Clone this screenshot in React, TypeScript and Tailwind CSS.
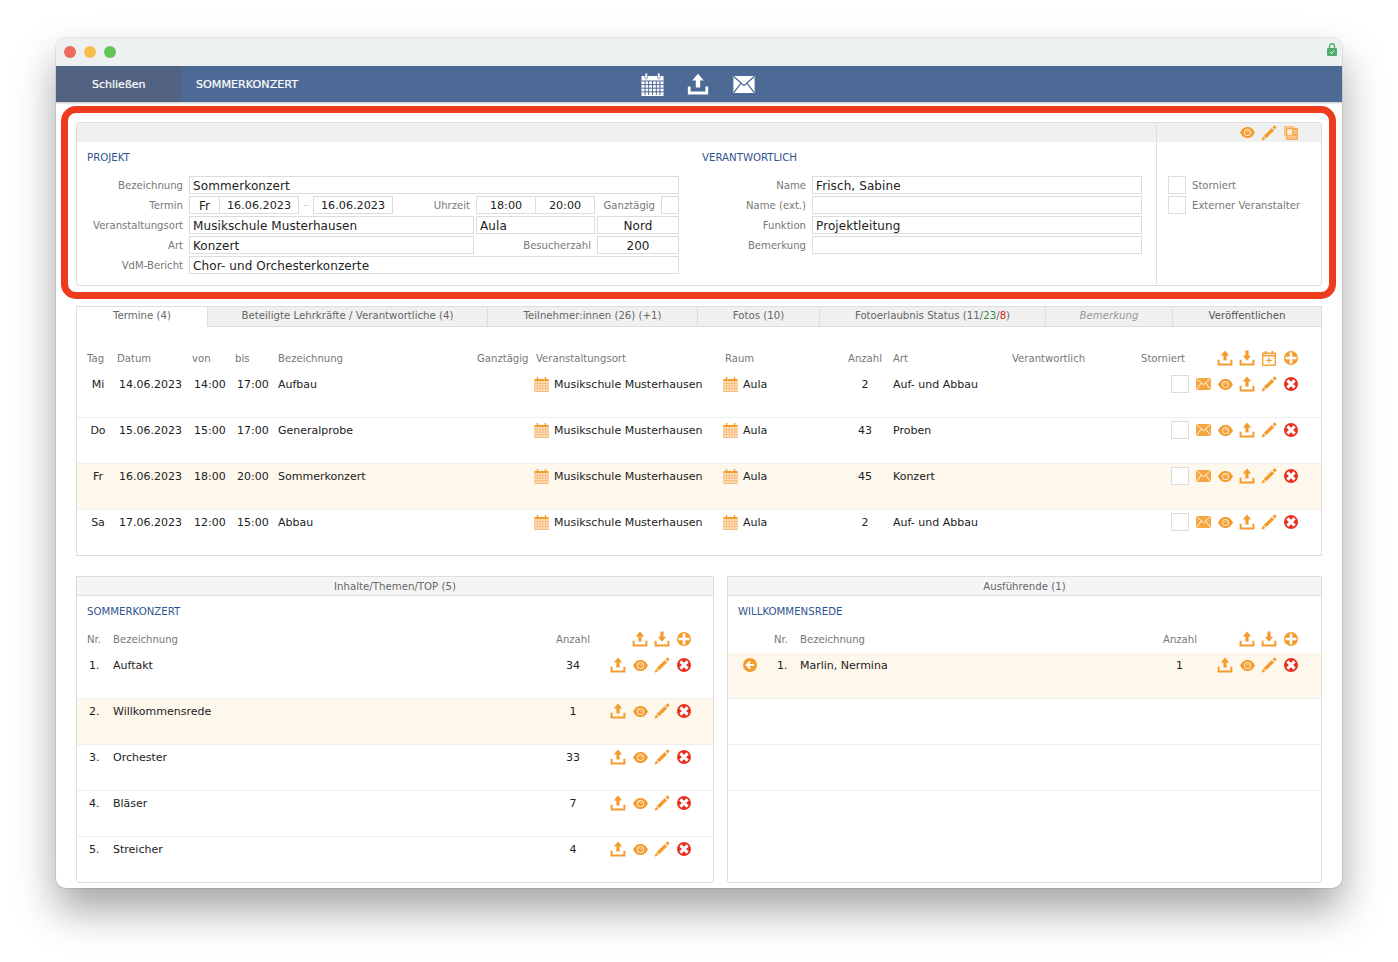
import React from "react";

const O = "#f39c2d";
const R = "#e8301e";

function UploadIcon({ c = O, w = 16 }: { c?: string; w?: number }) {
  return (
    <svg width={w} height={w} viewBox="0 0 16 16" fill={c}>
      <path d="M8 .5 12.2 5.4H9.6V10.6H6.4V5.4H3.8Z" />
      <path d="M.6 9.8H2.6V13.4H13.4V9.8H15.4V15.6H.6Z" />
    </svg>
  );
}
function DownloadIcon() {
  return (
    <svg width={16} height={16} viewBox="0 0 16 16" fill={O}>
      <path d="M6.4 .5H9.6V5.8H12.2L8 10.7 3.8 5.8H6.4Z" />
      <path d="M.6 9.8H2.6V13.4H13.4V9.8H15.4V15.6H.6Z" />
    </svg>
  );
}
function EyeIcon() {
  return (
    <svg width={15} height={11} viewBox="0 0 15 11">
      <path d="M0 5.5C2.5 1 5 0 7.5 0S12.5 1 15 5.5C12.5 10 10 11 7.5 11S2.5 10 0 5.5Z" fill={O} />
      <circle cx="7.5" cy="5.5" r="3.6" fill="#fde6c8" />
      <circle cx="7.5" cy="5.5" r="2.5" fill={O} />
      <path d="M6.4 3.6 7.6 5.4 9.3 4.6" stroke="#fde6c8" strokeWidth=".7" fill="none" />
    </svg>
  );
}
function PencilIcon() {
  return (
    <svg width={16} height={16} viewBox="0 0 16 16" fill={O}>
      <path d="M10.8 3 13.2 5.4 5.2 13.3 2.7 10.9Z" />
      <path d="M11.6 2.2 13 .8C13.4.5 13.8.5 14.2.8L15.2 1.8C15.5 2.2 15.5 2.6 15.2 3L13.9 4.5Z" />
      <path d="M2.2 11.6 4.5 13.9 1.4 15.4C.8 15.6.5 15.2.7 14.7Z" />
    </svg>
  );
}
function XIcon() {
  return (
    <svg width={14} height={14} viewBox="0 0 14 14">
      <circle cx="7" cy="7" r="7" fill={R} />
      <path d="M3.4 3.4 10.6 10.6M10.6 3.4 3.4 10.6" stroke="#fff" strokeWidth="3" />
    </svg>
  );
}
function PlusIcon() {
  return (
    <svg width={14} height={14} viewBox="0 0 14 14">
      <circle cx="7" cy="7" r="7" fill={O} />
      <path d="M7 1.5V12.5M1.5 7H12.5" stroke="#fff" strokeWidth="2.6" />
    </svg>
  );
}
function BackIcon() {
  return (
    <svg width={14} height={14} viewBox="0 0 14 14">
      <circle cx="7" cy="7" r="7" fill={O} />
      <path d="M7.2 3.4 3.6 7 7.2 10.6M3.8 7H11" stroke="#fff" strokeWidth="2" fill="none" />
    </svg>
  );
}
function MailIcon({ c = "#f4a640", line = "#fff", w = 15, h = 12 }: { c?: string; line?: string; w?: number; h?: number }) {
  return (
    <svg width={w} height={h} viewBox="0 0 15 12">
      <rect width="15" height="12" fill={c} />
      <path d="M.3.3 7.5 6.8 14.7.3M.3 11.7 5.4 5M14.7 11.7 9.6 5" stroke={line} strokeWidth=".9" fill="none" />
    </svg>
  );
}
function CalPlusIcon() {
  return (
    <svg width={14} height={15} viewBox="0 0 14 15" fill="none" stroke={O}>
      <rect x=".7" y="2.2" width="12.6" height="12" strokeWidth="1.3" />
      <path d="M.7 4.6H13.3" strokeWidth="1.6" />
      <path d="M3.6 0V3M10.4 0V3" strokeWidth="1.6" />
      <path d="M7 6.6V12.2M4.2 9.4H9.8" strokeWidth="1.2" />
    </svg>
  );
}
function CalIcon() {
  return (
    <svg width={15} height={15} viewBox="0 0 15 15">
      <rect x=".5" y="2" width="14" height="13" fill="#fde3c2" />
      <rect x=".5" y="2" width="14" height="2" fill={O} />
      <path d="M3.5 0V3M11.5 0V3" stroke={O} strokeWidth="1.4" />
      <path d="M.5 6.5H14.5M.5 9H14.5M.5 11.5H14.5M.5 14.5H14.5M3.3 4V15M6.1 4V15M8.9 4V15M11.7 4V15M.8 4V15M14.2 4V15" stroke="#f6b36a" strokeWidth=".7" />
    </svg>
  );
}
function CopyIcon() {
  return (
    <svg width={14} height={14} viewBox="0 0 15 15">
      <rect x="0" y="0" width="11" height="11" fill="#f8c58a" />
      <rect x="2" y="2" width="13" height="13" fill="#f5a94f" />
      <rect x="3.5" y="3.5" width="5" height="6" fill="#fdeedb" />
      <path d="M9.5 5H14M9.5 7.5H14M3.5 11H14M3.5 13H14" stroke="#fde3c2" strokeWidth=".9" />
    </svg>
  );
}
function WhiteCal() {
  return (
    <svg width={23} height={23} viewBox="0 0 23 23">
      <rect x=".5" y="3" width="22" height="20" fill="#fff" />
      <rect x="4" y="0" width="2.4" height="6" rx="1.2" fill="#fff" stroke="#4d6995" strokeWidth=".6" />
      <rect x="16.6" y="0" width="2.4" height="6" rx="1.2" fill="#fff" stroke="#4d6995" strokeWidth=".6" />
      <path d="M.5 8H22.5M.5 11.6H22.5M.5 15.2H22.5M.5 18.8H22.5M4.1 8V22M7.7 8V22M11.5 8V22M15.3 8V22M18.9 8V22" stroke="#4d6995" strokeWidth="1" />
    </svg>
  );
}
function LockIcon() {
  return (
    <svg width={10} height={13} viewBox="0 0 10 13">
      <path d="M2.5 5V3.2a2.5 2.5 0 0 1 5 0V5" fill="none" stroke="#4fae6e" strokeWidth="1.4" />
      <rect y="5" width="10" height="8" rx="1" fill="#4fae6e" />
      <path d="M3 9.2 4.4 10.6 7.2 7.6" fill="none" stroke="#fff" strokeWidth="1" />
    </svg>
  );
}

function Slot({ children }: { children?: React.ReactNode }) {
  return <div className="w-[22px] h-[24px] flex items-center justify-center shrink-0">{children}</div>;
}

function Box({ w, children, center, ml, num }: { w: string; children?: React.ReactNode; center?: boolean; ml?: boolean; num?: boolean }) {
  return (
    <div
      className={`${w} ${ml ? "-ml-px" : ""} ${num ? "text-[11.2px]" : "text-[12px] tracking-[0.1px]"} h-[18px] shrink-0 border border-[#dcdcdc] bg-white px-[3px] pt-[2px] flex items-center text-[#222] whitespace-nowrap ${center ? "justify-center" : ""}`}
    >
      {children}
    </div>
  );
}

function Label({ w, children }: { w: string; children: React.ReactNode }) {
  return <div className={`${w} shrink-0 h-[18px] pr-[6px] text-right text-[#777] text-[10.1px] leading-[20px] whitespace-nowrap`}>{children}</div>;
}

function Title({ children, className = "" }: { children: React.ReactNode; className?: string }) {
  return <div className={`h-[16px] leading-[18px] text-[10.2px] text-[#2f5590] ${className}`}>{children}</div>;
}

const termine = [
  ["Mi", "14.06.2023", "14:00", "17:00", "Aufbau", "2", "Auf- und Abbau"],
  ["Do", "15.06.2023", "15:00", "17:00", "Generalprobe", "43", "Proben"],
  ["Fr", "16.06.2023", "18:00", "20:00", "Sommerkonzert", "45", "Konzert"],
  ["Sa", "17.06.2023", "12:00", "15:00", "Abbau", "2", "Auf- und Abbau"],
];
const inhalte = [
  ["1.", "Auftakt", "34"],
  ["2.", "Willkommensrede", "1"],
  ["3.", "Orchester", "33"],
  ["4.", "Bläser", "7"],
  ["5.", "Streicher", "4"],
];
const tabGrid = "grid grid-cols-[40px_75px_43px_43px_199px_59px_189px_123px_45px_119px_129px_51px_110px]";
const leftGrid = "grid grid-cols-[36px_443px_51px_88px]";
const rightGrid = "grid grid-cols-[46px_26px_363px_51px_88px]";
const cell = "h-[24px] flex items-center whitespace-nowrap";
const txt = "h-[24px] pt-[2px] flex items-center whitespace-nowrap";

function RowIcons() {
  return (
    <div className="flex">
      <Slot><UploadIcon /></Slot>
      <Slot><EyeIcon /></Slot>
      <Slot><PencilIcon /></Slot>
      <Slot><XIcon /></Slot>
    </div>
  );
}
function HeadIcons() {
  return (
    <div className="flex pl-[22px] -mt-[2px]">
      <Slot><UploadIcon /></Slot>
      <Slot><DownloadIcon /></Slot>
      <Slot><PlusIcon /></Slot>
    </div>
  );
}

export default function App() {
  return (
    <div className="w-[1398px] h-[962px] bg-white pt-[38px] pl-[56px] overflow-hidden [font-family:'DejaVu_Sans',sans-serif]">
      <div className="relative w-[1286px] h-[850px] rounded-[10px] bg-white overflow-hidden shadow-[0_0_0_1px_rgba(0,0,0,0.07),0_22px_42px_rgba(0,0,0,0.36)]">
        {/* title bar */}
        <div className="h-[28px] bg-[#eef1f1] flex items-center pl-[8px] gap-[8px]">
          <span className="w-[12px] h-[12px] rounded-full bg-[#ed6a5e]" />
          <span className="w-[12px] h-[12px] rounded-full bg-[#f5bf4f]" />
          <span className="w-[12px] h-[12px] rounded-full bg-[#61c554]" />
          <span className="ml-auto mr-[5px] -mt-[5px] flex"><LockIcon /></span>
        </div>
        {/* toolbar */}
        <div className="h-[36px] bg-[#4d6995] flex items-center shadow-[0_1px_2px_rgba(0,0,0,0.25)] relative">
          <div className="w-[125px] h-full bg-[#526382] pt-[2px] flex items-center pl-[36px] text-[11px] text-white [-webkit-text-stroke:0.2px_white]">Schließen</div>
          <div className="w-[460px] pl-[15px] pt-[2px] text-[11.15px] text-white [-webkit-text-stroke:0.2px_white]">SOMMERKONZERT</div>
          <div className="flex items-center gap-[23px]">
            <WhiteCal />
            <UploadIcon c="#fff" w={22} />
            <div className="ml-[1px] flex"><MailIcon c="#fff" line="#4d6995" w={22} h={17} /></div>
          </div>
        </div>

        <div className="px-[20px] pt-[20px]">
          {/* project panel */}
          <div className="h-[164px] border border-[#ddd] rounded-[3px] flex overflow-hidden">
            <div className="w-[1079px] shrink-0">
              <div className="h-[19px] bg-[#f0f0f0]" />
              <div className="flex">
                <div className="w-[613px] shrink-0 pl-[6px]">
                  <Title className="mt-[7px] ml-[4px]">PROJEKT</Title>
                  <div className="mt-[11px] flex flex-col gap-[2px]">
                    <div className="flex">
                      <Label w="w-[106px]">Bezeichnung</Label>
                      <Box w="w-[490px]">Sommerkonzert</Box>
                    </div>
                    <div className="flex">
                      <Label w="w-[106px]">Termin</Label>
                      <Box w="w-[31px]" center>Fr</Box>
                      <Box w="w-[80px]" center ml num>16.06.2023</Box>
                      <div className="w-[14px] text-center text-[#ccc] text-[11px] leading-[18px]">–</div>
                      <Box w="w-[80px]" center num>16.06.2023</Box>
                      <Label w="w-[83px]">Uhrzeit</Label>
                      <Box w="w-[60px]" center num>18:00</Box>
                      <Box w="w-[60px]" center ml num>20:00</Box>
                      <Label w="w-[66px]">Ganztägig</Label>
                      <Box w="w-[18px]" />
                    </div>
                    <div className="flex gap-0">
                      <Label w="w-[106px]">Veranstaltungsort</Label>
                      <Box w="w-[285px]">Musikschule Musterhausen</Box>
                      <div className="w-[2px]" />
                      <Box w="w-[119px]">Aula</Box>
                      <div className="w-[2px]" />
                      <Box w="w-[82px]" center>Nord</Box>
                    </div>
                    <div className="flex">
                      <Label w="w-[106px]">Art</Label>
                      <Box w="w-[285px]">Konzert</Box>
                      <Label w="w-[123px]">Besucherzahl</Label>
                      <Box w="w-[82px]" center>200</Box>
                    </div>
                    <div className="flex">
                      <Label w="w-[106px]">VdM-Bericht</Label>
                      <Box w="w-[490px]">Chor- und Orchesterkonzerte</Box>
                    </div>
                  </div>
                </div>
                <div className="flex-1">
                  <Title className="mt-[7px] ml-[12px]">VERANTWORTLICH</Title>
                  <div className="mt-[11px] flex flex-col gap-[2px]">
                    <div className="flex"><Label w="w-[122px]">Name</Label><Box w="w-[330px]">Frisch, Sabine</Box></div>
                    <div className="flex"><Label w="w-[122px]">Name (ext.)</Label><Box w="w-[330px]" /></div>
                    <div className="flex"><Label w="w-[122px]">Funktion</Label><Box w="w-[330px]">Projektleitung</Box></div>
                    <div className="flex"><Label w="w-[122px]">Bemerkung</Label><Box w="w-[330px]" /></div>
                  </div>
                </div>
              </div>
            </div>
            <div className="flex-1 border-l border-[#ddd] mb-[1px]">
              <div className="h-[19px] bg-[#f0f0f0] flex items-center justify-end pr-[19px]">
                <div className="w-[22px] flex justify-center"><EyeIcon /></div>
                <div className="w-[22px] flex justify-center"><PencilIcon /></div>
                <div className="w-[22px] flex justify-center"><CopyIcon /></div>
              </div>
              <div className="pt-[34px] pl-[11px] flex flex-col gap-[2px]">
                <div className="flex"><Box w="w-[18px]" /><span className="ml-[6px] h-[18px] leading-[20px] text-[10.1px] text-[#777]">Storniert</span></div>
                <div className="flex"><Box w="w-[18px]" /><span className="ml-[6px] h-[18px] leading-[20px] text-[10.1px] text-[#777]">Externer Veranstalter</span></div>
              </div>
            </div>
          </div>

          {/* tab panel */}
          <div className="mt-[20px] h-[250px] border border-[#ddd] flex flex-col">
            <div className="h-[20px] flex text-[10.2px] text-[#666] leading-[18px] text-center shrink-0">
              <div className="w-[131px] border-r border-[#ddd]">Termine (4)</div>
              <div className="w-[280px] bg-[#f0f0f0] border-r border-b border-[#ddd]">Beteiligte Lehrkräfte / Verantwortliche (4)</div>
              <div className="w-[210px] bg-[#f0f0f0] border-r border-b border-[#ddd]">Teilnehmer:innen (26) (+1)</div>
              <div className="w-[122px] bg-[#f0f0f0] border-r border-b border-[#ddd]">Fotos (10)</div>
              <div className="w-[226px] bg-[#f0f0f0] border-r border-b border-[#ddd]">
                Fotoerlaubnis Status (11/<span className="text-[#2e8b3d]">23</span>/<span className="text-[#d0201a]">8</span>)
              </div>
              <div className="w-[127px] bg-[#f0f0f0] border-r border-b border-[#ddd] italic text-[#999]">Bemerkung</div>
              <div className="flex-1 bg-[#f0f0f0] border-b border-[#ddd] text-[#555]">Veröffentlichen</div>
            </div>
            <div className={`${tabGrid} mt-[21px] h-[20px] items-center text-[10.1px] text-[#777] whitespace-nowrap shrink-0`}>
              <div className="pl-[10px]">Tag</div>
              <div>Datum</div>
              <div>von</div>
              <div>bis</div>
              <div>Bezeichnung</div>
              <div>Ganztägig</div>
              <div>Veranstaltungsort</div>
              <div>Raum</div>
              <div>Anzahl</div>
              <div>Art</div>
              <div>Verantwortlich</div>
              <div>Storniert</div>
              <div className="flex pl-[22px] -mt-[2px]">
                <Slot><UploadIcon /></Slot>
                <Slot><DownloadIcon /></Slot>
                <Slot><CalPlusIcon /></Slot>
                <Slot><PlusIcon /></Slot>
              </div>
            </div>
            <div className="mt-[4px] flex-1 flex flex-col">
              {termine.map((r, i) => (
                <div
                  key={r[0]}
                  className={`${tabGrid} h-[46px] text-[11px] text-[#222] ${i === 2 ? "bg-[#fdf7ec]" : ""} ${i < 3 ? "border-b border-[#eee]" : ""}`}
                >
                  <div className={`${txt} justify-center pl-[2px]`}>{r[0]}</div>
                  <div className={`${txt} pl-[2px]`}>{r[1]}</div>
                  <div className={`${txt} pl-[2px]`}>{r[2]}</div>
                  <div className={`${txt} pl-[2px]`}>{r[3]}</div>
                  <div className={txt}>{r[4]}</div>
                  <div className={cell} />
                  <div className={`${cell} -ml-[2px] gap-[5px]`}><CalIcon /><span className="pt-[2px]">Musikschule Musterhausen</span></div>
                  <div className={`${cell} -ml-[2px] gap-[5px]`}><CalIcon /><span className="pt-[2px]">Aula</span></div>
                  <div className={`${txt} w-[34px] justify-center`}>{r[5]}</div>
                  <div className={txt}>{r[6]}</div>
                  <div className={cell} />
                  <div className={`${cell} pl-[30px]`}><Box w="w-[18px]" /></div>
                  <div className="flex">
                    <Slot><MailIcon /></Slot>
                    <Slot><EyeIcon /></Slot>
                    <Slot><UploadIcon /></Slot>
                    <Slot><PencilIcon /></Slot>
                    <Slot><XIcon /></Slot>
                  </div>
                </div>
              ))}
            </div>
          </div>

          {/* bottom panels */}
          <div className="mt-[20px] flex gap-[13px]">
            <div className="w-[638px] h-[307px] border border-[#ddd] rounded-b-[3px] flex flex-col overflow-hidden">
              <div className="h-[19px] shrink-0 bg-[#f5f5f5] border-b border-[#ddd] text-center text-[10.2px] text-[#666] leading-[19px]">Inhalte/Themen/TOP (5)</div>
              <Title className="mt-[7px] ml-[10px]">SOMMERKONZERT</Title>
              <div className={`${leftGrid} mt-[10px] h-[20px] items-center text-[10.1px] text-[#777] shrink-0`}>
                <div className="pl-[10px]">Nr.</div>
                <div>Bezeichnung</div>
                <div>Anzahl</div>
                <HeadIcons />
              </div>
              <div className="mt-[4px] flex-1 flex flex-col">
                {inhalte.map((r, i) => (
                  <div key={r[0]} className={`${leftGrid} h-[46px] text-[11px] text-[#222] ${i === 1 ? "bg-[#fdf7ec]" : ""} ${i < 4 ? "border-b border-[#eee]" : ""}`}>
                    <div className={`${txt} pl-[12px]`}>{r[0]}</div>
                    <div className={txt}>{r[1]}</div>
                    <div className={`${txt} w-[34px] justify-center`}>{r[2]}</div>
                    <RowIcons />
                  </div>
                ))}
              </div>
            </div>
            <div className="w-[595px] h-[307px] border border-[#ddd] rounded-b-[3px] flex flex-col overflow-hidden">
              <div className="h-[19px] shrink-0 bg-[#f5f5f5] border-b border-[#ddd] text-center text-[10.2px] text-[#666] leading-[19px]">Ausführende (1)</div>
              <Title className="mt-[7px] ml-[10px]">WILLKOMMENSREDE</Title>
              <div className={`${rightGrid} mt-[10px] h-[20px] items-center text-[10.1px] text-[#777] shrink-0`}>
                <div />
                <div>Nr.</div>
                <div>Bezeichnung</div>
                <div>Anzahl</div>
                <HeadIcons />
              </div>
              <div className="mt-[4px] flex-1 flex flex-col">
                <div className={`${rightGrid} h-[46px] text-[11px] text-[#222] bg-[#fdf7ec] border-b border-[#eee]`}>
                  <div className={`${cell} w-[44px] justify-center`}><BackIcon /></div>
                  <div className={`${txt} pl-[3px]`}>1.</div>
                  <div className={txt}>Marlin, Nermina</div>
                  <div className={`${txt} w-[33px] justify-center`}>1</div>
                  <RowIcons />
                </div>
                <div className="h-[46px] border-b border-[#eee]" />
                <div className="h-[46px] border-b border-[#eee]" />
              </div>
            </div>
          </div>
        </div>

        {/* red highlight */}
        <div className="absolute left-[5px] top-[68px] w-[1275px] h-[193px] border-[7px] border-[#ee3b1e] rounded-[15px] pointer-events-none" />
      </div>
    </div>
  );
}
